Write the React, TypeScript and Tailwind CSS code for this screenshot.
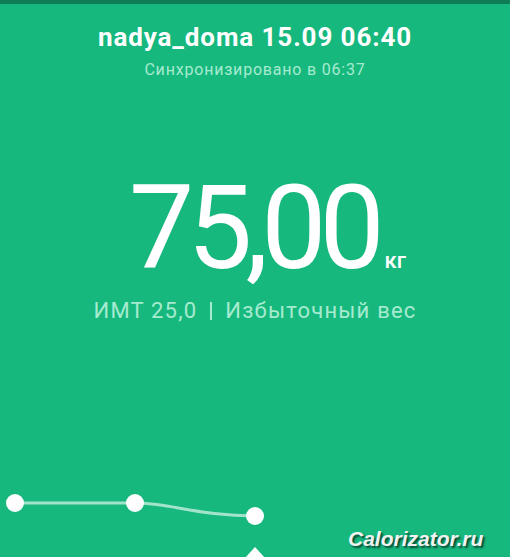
import React from "react";

export default function App() {
  return (
    <div className="relative w-[510px] h-[557px] overflow-hidden bg-[#17b87e] font-['Roboto',sans-serif] text-white">
      <div className="h-[4px] bg-[#0f7d55]" />
      <div className="flex flex-col items-center pt-[17px]">
        <h1 className="text-[26px] font-bold leading-[32px] tracking-[0.9px]">nadya_doma 15.09 06:40</h1>
        <p className="mt-[7px] text-[16px] leading-[20px] tracking-[0.8px] text-[#a6ebcf]">Синхронизировано в 06:37</p>
      </div>

      <div className="flex justify-center items-baseline mt-[90px] pl-[25px]">
        <span className="text-[116px] leading-[116px] tracking-[-7px]">75,00</span>
        <span className="ml-[7px] text-[22px] font-medium leading-[22px]">кг</span>
      </div>

      <div className="flex justify-center items-center mt-[12px] text-[22px] leading-[26px] tracking-[1.2px] text-[#a6ebcf]">
        <span>ИМТ 25,0</span>
        <span className="mx-[13px] w-[2px] h-[18px] bg-[#a6ebcf]" />
        <span>Избыточный вес</span>
      </div>

      <svg className="absolute left-0 top-[480px]" width="510" height="77" viewBox="0 0 510 77">
        <path d="M15 23 L135 23 C170 23 200 36 255 36" stroke="rgba(255,255,255,0.6)" strokeWidth="3" fill="none" />
        <circle cx="15" cy="23" r="9" fill="#fff" />
        <circle cx="135" cy="23" r="9" fill="#fff" />
        <circle cx="255" cy="36" r="9" fill="#fff" />
        <polygon points="255,67 245,78 265,78" fill="#fff" />
      </svg>

      <span className="absolute left-[348px] top-[523px] text-[21px] font-bold italic text-[#f2f2f2] font-['Liberation_Sans',sans-serif] [text-shadow:2px_2px_2px_rgba(0,0,0,0.6)]">
        Calorizator.ru
      </span>
    </div>
  );
}
